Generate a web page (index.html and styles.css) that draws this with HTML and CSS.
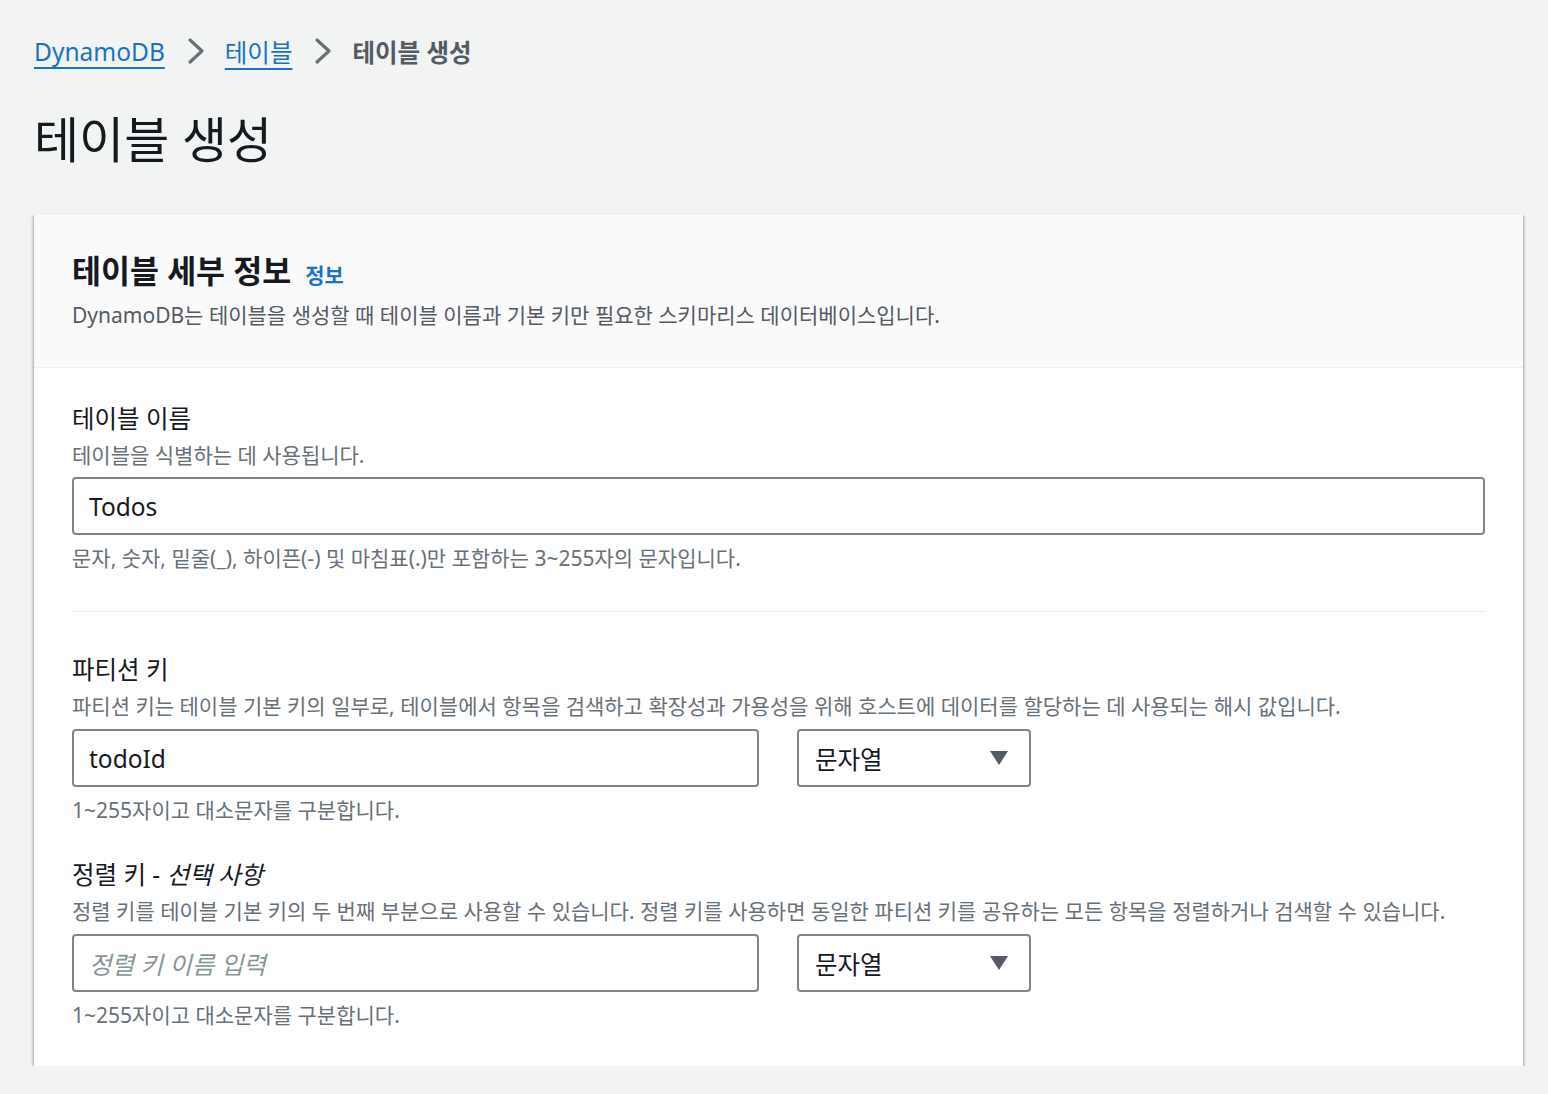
FILE: index.html
```html
<!DOCTYPE html>
<html lang="ko">
<head>
<meta charset="utf-8">
<title>테이블 생성</title>
<link rel="stylesheet" href="styles.css">
</head>
<body>
<div class="page">
  <nav class="breadcrumb">
    <a class="crumb-link" href="#">DynamoDB</a>
    <svg class="chev" viewBox="0 0 18 28" width="18" height="28"><path d="M3 3 L15 14 L3 25" fill="none" stroke="#687078" stroke-width="3.2" stroke-linecap="round" stroke-linejoin="round"/></svg>
    <a class="crumb-link" href="#">테이블</a>
    <svg class="chev" viewBox="0 0 18 28" width="18" height="28"><path d="M3 3 L15 14 L3 25" fill="none" stroke="#687078" stroke-width="3.2" stroke-linecap="round" stroke-linejoin="round"/></svg>
    <span class="crumb-current">테이블 생성</span>
  </nav>
  <h1 class="page-title">테이블 생성</h1>

  <section class="card">
    <header class="card-header">
      <h2 class="card-title">테이블 세부 정보 <a class="info-link" href="#">정보</a></h2>
      <p class="card-desc">DynamoDB는 테이블을 생성할 때 테이블 이름과 기본 키만 필요한 스키마리스 데이터베이스입니다.</p>
    </header>
    <div class="card-body">
      <div class="field">
        <div class="field-label">테이블 이름</div>
        <div class="field-desc">테이블을 식별하는 데 사용됩니다.</div>
        <div class="input full">Todos</div>
        <div class="field-hint">문자, 숫자, 밑줄(_), 하이픈(-) 및 마침표(.)만 포함하는 3~255자의 문자입니다.</div>
      </div>
      <div class="divider"></div>
      <div class="field key-field">
        <div class="field-label">파티션 키</div>
        <div class="field-desc">파티션 키는 테이블 기본 키의 일부로, 테이블에서 항목을 검색하고 확장성과 가용성을 위해 호스트에 데이터를 할당하는 데 사용되는 해시 값입니다.</div>
        <div class="key-row">
          <div class="input key-input">todoId</div>
          <div class="select"><span>문자열</span><svg class="caret" viewBox="0 0 20 16" width="20" height="16"><path d="M1 1 H19 L10 15 Z" fill="#545b64"/></svg></div>
        </div>
        <div class="field-hint">1~255자이고 대소문자를 구분합니다.</div>
      </div>
      <div class="field key-field sort">
        <div class="field-label">정렬 키 - <i>선택 사항</i></div>
        <div class="field-desc">정렬 키를 테이블 기본 키의 두 번째 부분으로 사용할 수 있습니다. 정렬 키를 사용하면 동일한 파티션 키를 공유하는 모든 항목을 정렬하거나 검색할 수 있습니다.</div>
        <div class="key-row">
          <div class="input key-input placeholder">정렬 키 이름 입력</div>
          <div class="select"><span>문자열</span><svg class="caret" viewBox="0 0 20 16" width="20" height="16"><path d="M1 1 H19 L10 15 Z" fill="#545b64"/></svg></div>
        </div>
        <div class="field-hint">1~255자이고 대소문자를 구분합니다.</div>
      </div>
    </div>
  </section>
</div>
</body>
</html>
```
FILE: styles.css
```css
* { box-sizing: border-box; }
html, body { margin: 0; padding: 0; }
body {
  background: #f2f3f3;
  font-family: "Noto Sans", "Noto Sans CJK KR", sans-serif;
  color: #16191f;
}
.page {
  padding: 33px 25px 0 34px;
}
.breadcrumb {
  display: flex;
  align-items: center;
  height: 36px;
  font-size: 24.5px;
}
.crumb-link {
  color: #1a73c2;
  text-decoration: underline;
  text-decoration-thickness: 2px;
  text-underline-offset: 6px;
}
.chev { margin: 0 20px 0 22px; }
.crumb-current { color: #545b64; font-weight: 700; }
.page-title {
  margin: 42px 0 0 0;
  font-size: 49px;
  font-weight: 400;
  line-height: 56px;
}
.card {
  margin-top: 47px;
  width: 1489px;
  background: #ffffff;
  border-top: 1px dotted #dfe3e3;
  box-shadow: 0 2px 2px rgba(0, 28, 36, 0.3), 2px 2px 2px rgba(0, 28, 36, 0.15), -2px 2px 2px rgba(0, 28, 36, 0.15);
}
.card-header {
  background: #fafafa;
  padding: 38px 38px 36px;
  border-bottom: 1px dotted #e0e3e3;
}
.card-title {
  margin: 0;
  font-size: 31.5px;
  font-weight: 700;
  line-height: 36px;
  display: flex;
  align-items: baseline;
}
.info-link {
  margin-left: 14px;
  font-size: 21px;
  color: #1a73c2;
  text-decoration: none;
  font-weight: 700;
}
.card-desc {
  margin: 6px 0 0;
  font-size: 21px;
  line-height: 32px;
  color: #545b64;
}
.card-body {
  padding: 35px 38px 35px;
}
.field-label {
  font-size: 24.5px;
  line-height: 32px;
}
.field-label i { font-style: italic; }
.field-desc {
  margin-top: 4px;
  font-size: 21px;
  line-height: 32px;
  color: #687078;
}
.input {
  margin-top: 6px;
  height: 58px;
  border: 2px solid #7d858d;
  border-radius: 4px;
  background: #fff;
  padding: 0 15px;
  display: flex;
  align-items: center;
  font-size: 24.5px;
}
.input.full { width: 1413px; }
.field-hint {
  margin-top: 7px;
  font-size: 21px;
  line-height: 32px;
  color: #687078;
}
.divider {
  margin: 37px 0 42px;
  width: 1413px;
  border-top: 1px dotted #e0e3e3;
}
.key-row {
  display: flex;
  gap: 38px;
  margin-top: 7px;
}
.key-row .input { margin-top: 0; }
.key-input { width: 687px; }
.placeholder { color: #879596; font-style: italic; }
.select {
  width: 234px;
  height: 58px;
  border: 2px solid #7d858d;
  border-radius: 4px;
  display: flex;
  align-items: center;
  justify-content: space-between;
  padding: 0 20px 0 16px;
  font-size: 24.5px;
}
.caret { display: block; }
.sort { margin-top: 33px; }
```
